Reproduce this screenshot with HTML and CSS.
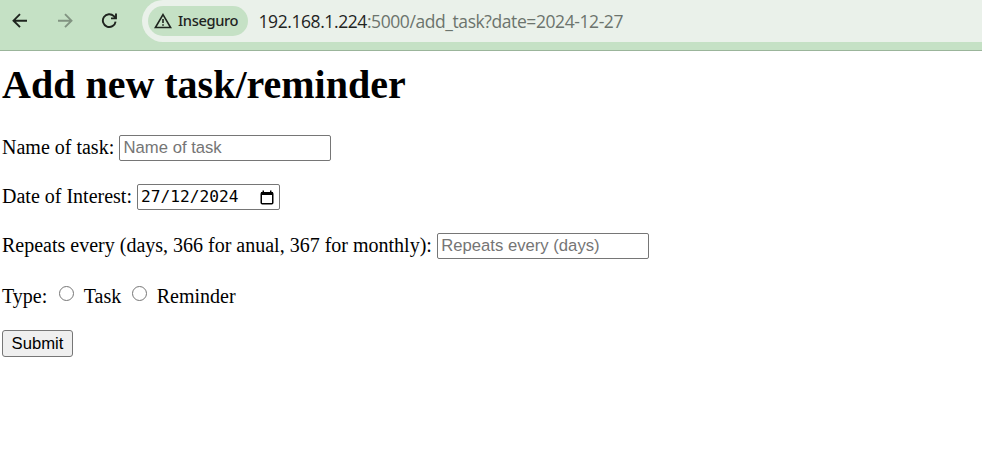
FILE: index.html
```html
<!DOCTYPE html>
<html lang="en">
<head>
<meta charset="utf-8">
<title>Add new task/reminder</title>
<link rel="stylesheet" href="styles.css">
</head>
<body>
<header class="toolbar">
  <nav class="nav">
    <svg class="icon" viewBox="0 0 16 16"><path d="M15 7.7H1.5M8 1.2L1.5 7.7L8 14.2"/></svg>
    <svg class="icon icon-disabled" viewBox="0 0 16 16"><path d="M1 7.7H14.5M8 1.2L14.5 7.7L8 14.2"/></svg>
    <svg class="icon" viewBox="0 0 16 16"><path d="M14.6 8.6A6.4 6.4 0 1 1 12.9 3.2L14.8 5.2M15 .4V5.4H10"/></svg>
  </nav>
  <div class="address">
    <div class="chip">
      <svg class="warning" viewBox="0 0 18 16"><path d="M9 1.6L16.6 14.5H1.4Z"/><path d="M9 6V10M9 11.2V12.8"/></svg>
      <span class="chip-text">Inseguro</span>
    </div>
    <div class="url"><span class="host">192.168.1.224</span><span class="path">:5000/add_task?date=2024-12-27</span></div>
  </div>
</header>
<main class="page">
  <h1 class="title">Add new task/reminder</h1>
  <form>
    <div class="row row-name"><label class="label" for="name">Name of task:</label><input class="field" id="name" type="text" placeholder="Name of task"></div>
    <div class="row row-date"><span class="label">Date of Interest:</span><div class="field date"><span class="date-text">27/12/2024</span><svg class="calendar" viewBox="0 0 14 15"><rect class="outline" x="1.25" y="2.75" width="11.5" height="11" rx="1"/><path class="solid" d="M1 2H13V5H1ZM2.5 .5H4V2H2.5ZM10 .5H11.5V2H10Z"/></svg></div></div>
    <div class="row row-repeat"><label class="label" for="repeat">Repeats every (days, 366 for anual, 367 for monthly):</label><input class="field" id="repeat" type="text" placeholder="Repeats every (days)"></div>
    <div class="row row-type"><span>Type:</span><input class="radio" id="task" type="radio" name="type"><label for="task">Task</label><input class="radio radio-second" id="reminder" type="radio" name="type"><label for="reminder">Reminder</label></div>
    <button class="submit" type="button">Submit</button>
  </form>
</main>
</body>
</html>
```
FILE: styles.css
```css
* { box-sizing: border-box; }
body {
  margin: 0;
  background: #fff;
  color: #000;
  font: 20px/23px "Liberation Serif", serif;
}
.toolbar {
  display: flex;
  align-items: flex-start;
  height: 51px;
  background: #c5e1c5;
  border-bottom: 1px solid #9bb59b;
}
.nav {
  display: flex;
  gap: 28.7px;
  width: 142px;
  padding: 13px 0 0 12px;
}
.icon {
  width: 16px;
  height: 16px;
  fill: none;
  stroke: #1f241f;
  stroke-width: 1.9;
}
.icon-disabled { stroke: #819381; }
.address {
  display: flex;
  flex: 1;
  align-items: center;
  height: 42px;
  padding-left: 6px;
  background: #eaf1ea;
  border-radius: 21px 0 0 21px;
}
.chip {
  display: flex;
  align-items: center;
  width: 100px;
  height: 30px;
  padding-left: 6px;
  background: #c5e1c5;
  border-radius: 15px;
}
.warning {
  width: 18px;
  height: 16px;
  fill: none;
  stroke: #1f241f;
  stroke-width: 1.6;
}
.chip-text {
  margin: -2px 0 0 6px;
  color: #1f241f;
  font: 500 14.7px/20px "Noto Sans", sans-serif;
  letter-spacing: -0.38px;
}
.url {
  margin-left: 10.5px;
  font: 17.5px/24px "Open Sans", sans-serif;
  letter-spacing: -0.42px;
  white-space: nowrap;
}
.host { color: #1f241f; }
.path { color: #6c746d; }
.page { padding: 11px 2px 0; }
.title {
  margin: 0;
  font-size: 40px;
  line-height: 46px;
}
.row {
  display: flex;
  align-items: center;
  height: 26px;
  white-space: nowrap;
}
.row-name { margin-top: 27px; }
.row-date, .row-repeat { margin-top: 23px; }
.row-type { margin-top: 24px; }
.label { margin-top: -2px; }
.field {
  width: 212px;
  height: 26px;
  margin: 0 0 0 5px;
  padding: 0 3.4px;
  background: #fff;
  border: 1px solid #767676;
  border-radius: 2px;
  font: 16.667px/22px "Liberation Sans", sans-serif;
}
.field::placeholder { color: #757575; opacity: 1; }
.date {
  display: flex;
  align-items: center;
  justify-content: space-between;
  width: 143px;
  padding: 0 5px 0 3px;
}
.date-text {
  font: 16.2px/22px "DejaVu Sans Mono", monospace;
}
.calendar { width: 14px; height: 15px; }
.outline { fill: none; stroke: #000; stroke-width: 1.5; }
.solid { fill: #000; }
.radio {
  appearance: none;
  width: 15px;
  height: 15px;
  margin: -6px 9.5px 0 12px;
  border: 1px solid #767676;
  border-radius: 50%;
}
.radio-second { margin-left: 11px; }
.submit {
  display: block;
  width: 71px;
  height: 27px;
  margin-top: 21px;
  padding: 0;
  background: #efefef;
  border: 1px solid #767676;
  border-radius: 3px;
  color: #000;
  font: 16.667px/22px "Liberation Sans", sans-serif;
}
```
